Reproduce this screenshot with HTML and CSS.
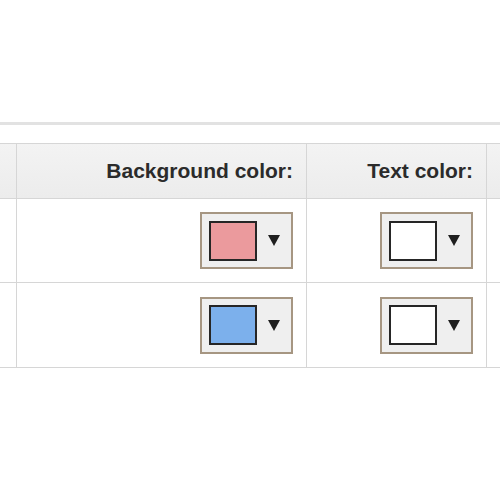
FILE: index.html
```html
<!DOCTYPE html>
<html lang="en">
<head>
  <meta charset="UTF-8" />
  <title>Label colors</title>
  <link rel="stylesheet" href="styles.css">
</head>
<body>

  <div class="topbar"></div>

  <div class="colors">
    <div class="cell head"></div>
    <div class="cell head right">Background color:</div>
    <div class="cell head right">Text color:</div>
    <div class="cell head"></div>

    <div class="cell"></div>
    <div class="cell right">
      <button class="picker"><span class="swatch" style="background:#eb9a9d"></span><span class="arrow"></span></button>
    </div>
    <div class="cell right">
      <button class="picker"><span class="swatch" style="background:#ffffff"></span><span class="arrow"></span></button>
    </div>
    <div class="cell"></div>

    <div class="cell"></div>
    <div class="cell right">
      <button class="picker"><span class="swatch" style="background:#7cb0ec"></span><span class="arrow"></span></button>
    </div>
    <div class="cell right">
      <button class="picker"><span class="swatch" style="background:#ffffff"></span><span class="arrow"></span></button>
    </div>
    <div class="cell"></div>
  </div>

</body>
</html>
```

FILE: styles.css
```css
body {
  margin: 0;
  font-family: 'Liberation Sans', Arial, sans-serif;
  background: #fff;
  overflow: hidden;
}

.topbar {
  height: 122px;
  border-bottom: 3px solid #e2e2e2;
  margin-bottom: 18px;
}

.colors {
  display: grid;
  grid-template-columns: 17px 290px 180px 1fr;
  grid-template-rows: 55px 84px 85px;
  border-top: 1px solid #d6d6d6;
}

.cell {
  border-right: 1px solid #d6d6d6;
  border-bottom: 1px solid #d6d6d6;
  display: flex;
  align-items: center;
}

.cell:nth-child(4n) {
  border-right: none;
}

.head {
  background: linear-gradient(#f3f3f3, #ececec);
  font-size: 21px;
  font-weight: bold;
  color: #2b2b2b;
}

.right {
  justify-content: flex-end;
  padding-right: 13px;
}

.picker {
  display: flex;
  align-items: center;
  width: 93px;
  height: 57px;
  padding: 0 0 0 7px;
  border: 2px solid #a69682;
  background: #efefef;
  cursor: pointer;
}

.swatch {
  width: 48px;
  height: 40px;
  box-sizing: border-box;
  border: 2px solid #262626;
}

/* small dropdown triangle */
.arrow {
  margin-left: 11px;
  width: 0;
  height: 0;
  border-left: 6px solid transparent;
  border-right: 6px solid transparent;
  border-top: 11px solid #1f1f1f;
}
```
